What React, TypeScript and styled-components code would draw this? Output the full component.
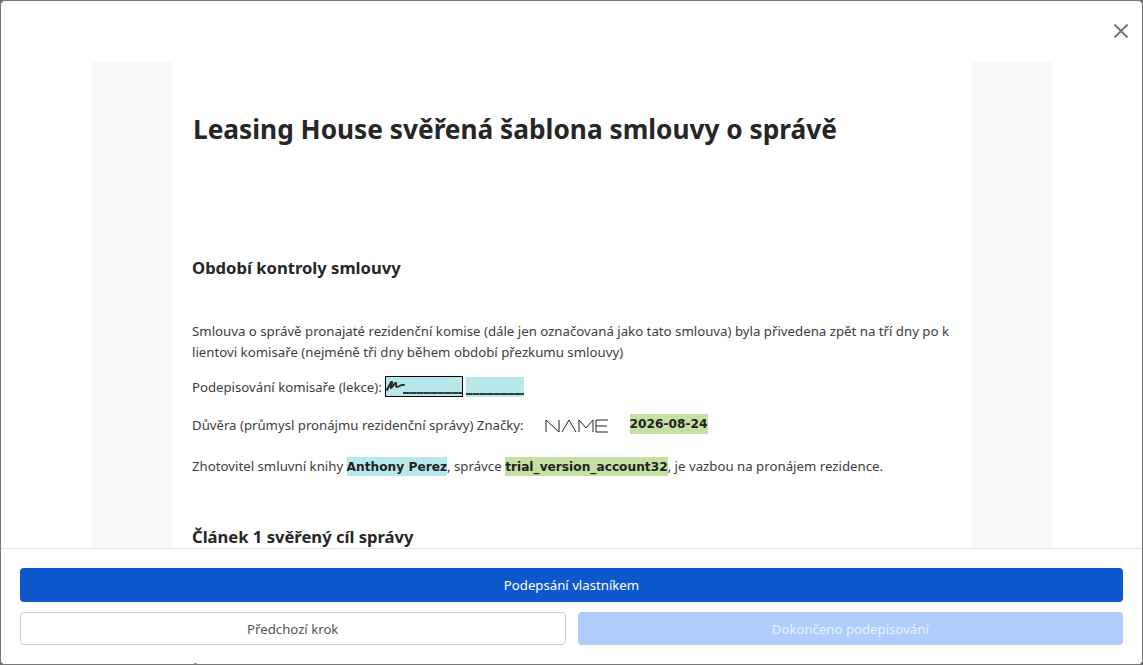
import React from "react";
import styled, { createGlobalStyle } from "styled-components";

const Global = createGlobalStyle`
  html, body { margin: 0; padding: 0; height: 100%; background: #6f6f6f; overflow: hidden; }
  #root { height: 100%; }
  * { box-sizing: border-box; }
`;

const Modal = styled.div`
  position: relative;
  width: 1143px;
  height: 665px;
  background: #fff;
  border: 1px solid #777;
  border-radius: 5px;
  overflow: hidden;
  display: flex;
  flex-direction: column;
  font-family: "Noto Sans", "Open Sans", sans-serif;
  color: #333;
`;

const Close = styled.button`
  position: absolute;
  top: 21px;
  right: 12px;
  width: 18px;
  height: 18px;
  padding: 0;
  border: 0;
  background: none;
  z-index: 3;
`;

const Scroller = styled.div`
  flex: 1;
  padding: 61px 91px 0;
  overflow: hidden;
`;

const Sheet = styled.div`
  width: 960px;
  background: #f7f8fa;
  padding: 0 80px;
  height: 700px;
`;

const Page = styled.div`
  background: #fff;
  height: 100%;
  padding: 49px 20px 0;
`;

const Title = styled.h1`
  margin: 0 0 0 1px;
  font-size: 26.25px;
  line-height: 36px;
  font-weight: 700;
  color: #262626;
`;

const Section = styled.h2<{ $top: number }>`
  margin: ${(p) => p.$top}px 0 0;
  font-size: 16.6px;
  line-height: 24px;
  font-weight: 700;
  color: #262626;
`;

const Para = styled.p<{ $top: number }>`
  margin: ${(p) => p.$top}px 0 0;
  font-size: 13.24px;
  line-height: 21px;
  color: #3d3d3d;
  white-space: nowrap;
`;

const Mark = styled.span<{ $tone: "blue" | "green" }>`
  background: ${(p) => (p.$tone === "blue" ? "#b8e8ec" : "#c5e0a5")};
  font-family: "DejaVu Sans", sans-serif;
  font-weight: 700;
  font-size: 12.2px;
  color: #222;
  padding: 3px 0 2px;
`;

const SignRow = styled.div`
  margin-top: 13px;
  height: 21px;
  display: flex;
  align-items: center;
  font-size: 13.2px;
  color: #3d3d3d;
`;

const SignField = styled.span<{ $selected?: boolean }>`
  position: relative;
  display: block;
  width: ${(p) => (p.$selected ? 78 : 58)}px;
  height: ${(p) => (p.$selected ? 21 : 20)}px;
  margin-left: 3px;
  background: #b8e8ec;
  border: ${(p) => (p.$selected ? "1px solid #000" : "0")};
`;

const Rule = styled.span<{ $left: number }>`
  position: absolute;
  left: ${(p) => p.$left}px;
  right: 0;
  bottom: 2px;
  height: 2px;
  background: repeating-linear-gradient(90deg, #2b3a3c 0 6px, #52666a 6px 7px);
`;

const Scribble = styled.svg`
  position: absolute;
  left: 0;
  top: 2px;
`;

const TrustRow = styled.div`
  margin-top: 15px;
  height: 26px;
  display: flex;
  align-items: center;
  font-size: 13.2px;
  color: #3d3d3d;
`;

const NameSign = styled.svg`
  margin-left: 21px;
  margin-top: 1px;
`;

const DateMark = styled(Mark)`
  margin-left: 21px;
  margin-top: -3px;
  padding: 2px 0 2px;
  line-height: 16px;
`;

const Footer = styled.div`
  position: absolute;
  left: 0;
  right: 0;
  bottom: 0;
  height: 116px;
  background: #fff;
  border-top: 1px solid #dee2e6;
  padding: 19px 19px 0;
  display: flex;
  flex-direction: column;
  gap: 10px;
  z-index: 2;
`;

const Primary = styled.button`
  height: 34px;
  border: 0;
  border-radius: 4px;
  background: #0f57cc;
  color: #fff;
  font: 13.2px "Noto Sans", sans-serif;
`;

const FooterRow = styled.div`
  display: grid;
  grid-template-columns: 1fr 1fr;
  gap: 12px;
`;

const Secondary = styled.button`
  height: 33px;
  border: 1px solid #ccc;
  border-radius: 4px;
  background: #fff;
  color: #555;
  font: 13.2px "Noto Sans", sans-serif;
`;

const Disabled = styled.button`
  height: 33px;
  border: 0;
  border-radius: 4px;
  background: #aecdfd;
  color: #e9f1ff;
  font: 13.2px "Noto Sans", sans-serif;
`;

const Peek = styled.div`
  position: absolute;
  left: 193px;
  top: 660px;
  z-index: 3;
  display: flex;
  align-items: flex-start;
  gap: 5px;
  font-size: 13.2px;
  font-weight: 700;
  line-height: 16px;
  color: #333;
  white-space: nowrap;
`;

const Bullet = styled.span`
  width: 3px;
  height: 16px;
  margin-top: 2px;
  background: #a9a83e;
`;

export default function App() {
  return (
    <Modal>
      <Global />
      <Close aria-label="Zavřít">
        <svg width="18" height="18" viewBox="0 0 18 18" fill="none" stroke="#777" strokeWidth="2">
          <path d="M2.5 2.5 L15.5 15.5 M15.5 2.5 L2.5 15.5" />
        </svg>
      </Close>
      <Scroller>
        <Sheet>
          <Page>
            <Title>Leasing House svěřená šablona smlouvy o správě</Title>
            <Section $top={109}>Období kontroly smlouvy</Section>
            <Para $top={41}>
              Smlouva o správě pronajaté rezidenční komise (dále jen označovaná jako tato smlouva) byla přivedena zpět na tří dny po k
              <br />
              lientovi komisaře (nejméně tři dny během období přezkumu smlouvy)
            </Para>
            <SignRow>
              Podepisování komisaře (lekce):
              <SignField $selected>
                <Scribble width="20" height="14" viewBox="0 0 20 14" fill="none" stroke="#262626" strokeWidth="1.9" strokeLinecap="round">
                  <path d="M1 11 C3 7 5 2 6 3 C7 4 4 8 5 9 C7 8 9 3 10 4 C11 5 9 8 11 8 C13 8 15 5 18 6" />
                </Scribble>
                <Rule $left={17} />
              </SignField>
              <SignField>
                <Rule $left={0} />
              </SignField>
            </SignRow>
            <TrustRow>
              Důvěra (průmysl pronájmu rezidenční správy) Značky:
              <NameSign width="64" height="16" viewBox="0 0 64 16" fill="none" stroke="#222" strokeWidth="1">
                <path d="M1 14 V2 L14 14 V2 M17 14 L24 2 L31 14 M34 14 V2 L41 10 L48 2 V14 M63 2 H51 V14 H63 M51 8 H62" />
              </NameSign>
              <DateMark $tone="green">2026-08-24</DateMark>
            </TrustRow>
            <Para $top={18}>
              Zhotovitel smluvní knihy <Mark $tone="blue">Anthony Perez</Mark>, správce{" "}
              <Mark $tone="green">trial_version_account32</Mark>, je vazbou na pronájem rezidence.
            </Para>
            <Section $top={47}>Článek 1 svěřený cíl správy</Section>
          </Page>
        </Sheet>
      </Scroller>
      <Footer>
        <Primary>Podepsání vlastníkem</Primary>
        <FooterRow>
          <Secondary>Předchozí krok</Secondary>
          <Disabled>Dokončeno podepisování</Disabled>
        </FooterRow>
      </Footer>
      <Peek>
        <Bullet />
        I. Popis nemovitosti
      </Peek>
    </Modal>
  );
}
